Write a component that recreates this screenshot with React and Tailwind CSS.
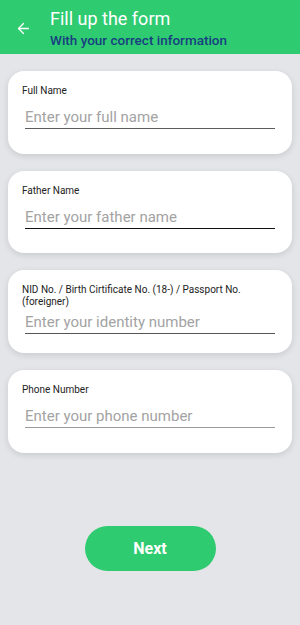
import { ArrowLeft } from 'lucide-react';

const fields = [
  { label: 'Full Name', placeholder: 'Enter your full name', line: 'border-[#5c5c5c]', h: 'h-[28px] mt-[4px]', pb: 'pb-[25px]' },
  { label: 'Father Name', placeholder: 'Enter your father name', line: 'border-[#111]', h: 'h-[28px] mt-[4px]', pb: 'pb-[24px]' },
  { label: 'NID No. / Birth Cirtificate No. (18-) / Passport No. (foreigner)', placeholder: 'Enter your identity number', line: 'border-[#555]', h: 'h-[25px] mt-[1px]', pb: 'pb-[19px]' },
  { label: 'Phone Number', placeholder: 'Enter your phone number', line: 'border-[#9a9a9a]', h: 'h-[28px] mt-[4px]', pb: 'pb-[25px]' },
];

export default function App() {
  return (
    <div className="w-[300px] h-[625px] bg-[#e4e5e9] flex flex-col" style={{ fontFamily: 'Roboto, "Liberation Sans", sans-serif' }}>
      <div className="h-[54px] bg-[#2fcb71] flex items-start pt-[8px] shrink-0">
        <div className="w-[50px] h-[40px] flex items-center pl-[15px]">
          <ArrowLeft size={17} strokeWidth={1.8} color="#ffffff" />
        </div>
        <div className="flex flex-col">
          <span className="text-white text-[18px] leading-[22px]">Fill up the form</span>
          <span className="text-[#173f80] text-[13.5px] leading-[20px] font-medium">With your correct information</span>
        </div>
      </div>

      <div className="flex flex-col gap-[17px] px-[8px] pt-[17px]">
        {fields.map((f) => (
          <div key={f.label} className={`bg-white rounded-[16px] shadow-[0_2px_6px_rgba(0,0,0,0.12)] pl-[14px] pr-[17px] pt-[14px] ${f.pb}`}>
            <div className="text-[10px] leading-[12px] text-[#222]">{f.label}</div>
            <div className={`ml-[3px] border-b ${f.line} flex items-end pb-[3px] ${f.h}`}>
              <span className="text-[15px] text-[#a3a3a3] leading-[15px]">{f.placeholder}</span>
            </div>
          </div>
        ))}
      </div>

      <div className="flex justify-center mt-[73px]">
        <button className="w-[131px] h-[45px] rounded-full bg-[#2fcb71] text-white font-bold text-[16px]">Next</button>
      </div>
    </div>
  );
}
